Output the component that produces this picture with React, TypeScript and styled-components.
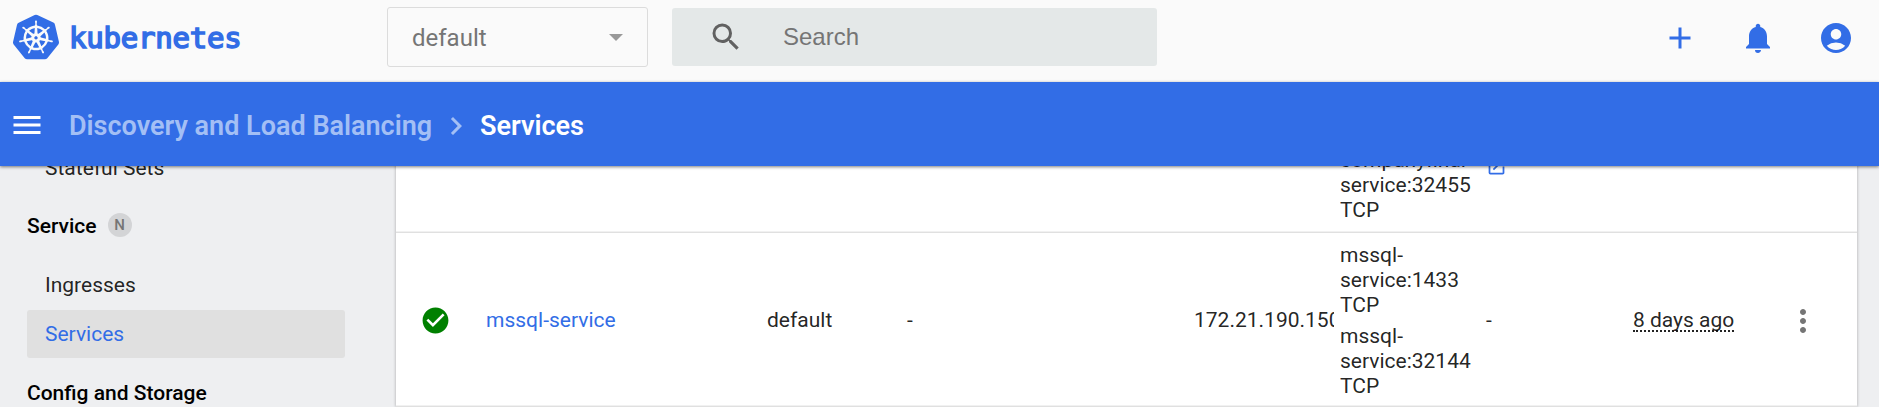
import React from "react";
import styled, { createGlobalStyle, css } from "styled-components";
import {
  MdMenu, MdSearch, MdAdd, MdNotifications, MdAccountCircle, MdCheckCircle,
  MdMoreVert, MdChevronRight, MdOpenInNew,
} from "react-icons/md";
import { SiKubernetes } from "react-icons/si";

const BLUE = "#326de6";

const GlobalStyle = createGlobalStyle`
  * { box-sizing: border-box; }
  body { margin: 0; background: #eeeff1; font-family: Roboto, "Liberation Sans", sans-serif; }
  svg { display: block; flex: none; }
`;

const Shell = styled.div`
  height: 407px;
  display: flex;
  flex-direction: column;
  overflow: hidden;
`;

const TopBar = styled.header`
  height: 82px;
  flex: none;
  display: flex;
  align-items: flex-start;
  background: #fafafa;
`;

const Brand = styled.div`
  width: 387px;
  height: 74px;
  padding-left: 13px;
  display: flex;
  align-items: center;
  color: ${BLUE};
`;

const Wordmark = styled.span`
  margin: 2px 0 0 10px;
  font: 29px/32px "DejaVu Sans Mono", monospace;
  letter-spacing: -0.2px;
  -webkit-text-stroke: 1.6px ${BLUE};
`;

const NamespaceSelect = styled.div`
  width: 261px;
  height: 60px;
  margin-top: 7px;
  padding: 1px 24px 0 24px;
  display: flex;
  align-items: center;
  justify-content: space-between;
  border: 1px solid #dcdcdc;
  border-radius: 3px;
  font-size: 24px;
  color: #757575;
`;

const Caret = styled.span`
  border: 7.5px solid transparent;
  border-top-color: #999;
  border-bottom: 0;
`;

const SearchBox = styled.div`
  width: 485px;
  height: 58px;
  margin: 8px 0 0 24px;
  padding-left: 36px;
  display: flex;
  align-items: center;
  border-radius: 3px;
  background: #e4e8e8;
  color: #616161;
`;

const Placeholder = styled.span`
  margin-left: 39px;
  font: 24px/28px "Liberation Sans", Arial, sans-serif;
  color: #757575;
`;

const Actions = styled.div`
  height: 76px;
  margin-left: auto;
  padding-right: 25px;
  display: flex;
  align-items: center;
  gap: 42px;
  color: ${BLUE};
`;

const CrumbBar = styled.nav`
  position: relative;
  z-index: 1;
  height: 84px;
  flex: none;
  display: flex;
  align-items: center;
  padding: 3px 0 0 9px;
  background: ${BLUE};
  color: #fff;
  font-size: 27px;
  font-weight: 600;
  box-shadow: 0 1px 3px rgba(0, 0, 0, 0.5);
`;

const MenuIcon = styled(MdMenu)`
  margin-bottom: 1px;
`;

const Crumb = styled.span<{ $parent?: boolean }>`
  line-height: 32px;
  white-space: nowrap;
  ${(p) => p.$parent && css`
    width: 363px;
    margin-left: 24px;
    color: #a3bff5;
  `}
`;

const Separator = styled(MdChevronRight)`
  margin: 0 6px;
  color: #a3bff5;
`;

const Body = styled.div`
  flex: 1;
  min-height: 0;
  display: flex;
  overflow: hidden;
`;

const Sidebar = styled.aside`
  width: 396px;
  flex: none;
  margin-top: -22px;
  padding: 0 51px 0 27px;
  color: #000;
  font-size: 21px;
`;

const NavItem = styled.div<{ $active?: boolean }>`
  height: 48px;
  margin-bottom: 1px;
  padding: 0 18px;
  border-radius: 3px;
  line-height: 48px;
  color: ${(p) => (p.$active ? BLUE : "rgba(0, 0, 0, 0.87)")};
  background: ${(p) => (p.$active ? "#e0e0e0" : "transparent")};
`;

const NavGroup = styled.div`
  height: 69px;
  margin-top: -1px;
  padding-bottom: 1px;
  display: flex;
  align-items: center;
  gap: 11px;
  font-weight: 500;

  &:last-child { padding-bottom: 0; }
`;

const Badge = styled.span`
  width: 24px;
  height: 24px;
  margin-bottom: 2px;
  border-radius: 50%;
  background: #d3d4d6;
  color: #757575;
  font-size: 15px;
  line-height: 25px;
  text-align: center;
`;

const Card = styled.main`
  width: 1461px;
  flex: none;
  margin-top: -107px;
  background: #fff;
  color: rgba(0, 0, 0, 0.87);
  font-size: 21px;
  line-height: 25px;
  box-shadow: 0 0 3px rgba(0, 0, 0, 0.3);
`;

const Row = styled.div`
  height: 174px;
  padding-left: 24px;
  display: flex;
  align-items: center;
  border-bottom: 1px solid #e0e0e0;
  box-shadow: inset 0 -1px #f1f1f1;

  &:first-child { padding-bottom: 2px; }
  & + & { padding-top: 2px; }
`;

const Cell = styled.div<{ $w: number; $clip?: boolean }>`
  width: ${(p) => p.$w}px;
  flex: none;
  ${(p) => p.$clip && css`
    margin-right: 6px;
    overflow: hidden;
    white-space: nowrap;
  `}
`;

const Port = styled.div`
  width: 135px;
  & + & { margin-top: 6px; }
`;

const Link = styled.span`
  color: ${BLUE};
`;

const ExternalIcon = styled(MdOpenInNew)`
  margin-top: 43px;
  color: ${BLUE};
`;

const Age = styled.span`
  border-bottom: 2px dotted #222;
  display: inline-block;
  height: 24px;
`;

type Service = {
  name?: string;
  namespace?: string;
  labels?: string;
  ip?: string;
  ports: string[];
  external?: React.ReactNode;
  age?: string;
};

const services: Service[] = [
  {
    ports: ["companyfinal-service:80 TCP", "companyfinal-service:32455 TCP"],
    external: <ExternalIcon size={21} />,
  },
  {
    name: "mssql-service",
    namespace: "default",
    labels: "-",
    ip: "172.21.190.150",
    ports: ["mssql-service:1433 TCP", "mssql-service:32144 TCP"],
    external: "-",
    age: "8 days ago",
  },
];

function ServiceRow({ s }: { s: Service }) {
  return (
    <Row>
      <Cell $w={66}>{s.name && <MdCheckCircle size={31} color="#008000" />}</Cell>
      <Cell $w={281}><Link>{s.name}</Link></Cell>
      <Cell $w={140}>{s.namespace}</Cell>
      <Cell $w={287}>{s.labels}</Cell>
      <Cell $w={140} $clip>{s.ip}</Cell>
      <Cell $w={146}>{s.ports.map((p) => <Port key={p}>{p}</Port>)}</Cell>
      <Cell $w={147}>{s.external}</Cell>
      <Cell $w={152}>{s.age && <Age>{s.age}</Age>}</Cell>
      {s.age && <MdMoreVert size={36} color="#757575" />}
    </Row>
  );
}

export default function App() {
  return (
    <Shell>
      <GlobalStyle />
      <TopBar>
        <Brand>
          <SiKubernetes size={46} />
          <Wordmark>kubernetes</Wordmark>
        </Brand>
        <NamespaceSelect>default<Caret /></NamespaceSelect>
        <SearchBox>
          <MdSearch size={36} />
          <Placeholder>Search</Placeholder>
        </SearchBox>
        <Actions>
          <MdAdd size={36} />
          <MdNotifications size={36} />
          <MdAccountCircle size={36} />
        </Actions>
      </TopBar>
      <CrumbBar>
        <MenuIcon size={36} />
        <Crumb $parent>Discovery and Load Balancing</Crumb>
        <Separator size={36} />
        <Crumb>Services</Crumb>
      </CrumbBar>
      <Body>
        <Sidebar>
          <NavItem>Stateful Sets</NavItem>
          <NavGroup>Service<Badge>N</Badge></NavGroup>
          <NavItem>Ingresses</NavItem>
          <NavItem $active>Services</NavItem>
          <NavGroup>Config and Storage</NavGroup>
        </Sidebar>
        <Card>
          {services.map((s) => <ServiceRow key={s.ports[0]} s={s} />)}
        </Card>
      </Body>
    </Shell>
  );
}
